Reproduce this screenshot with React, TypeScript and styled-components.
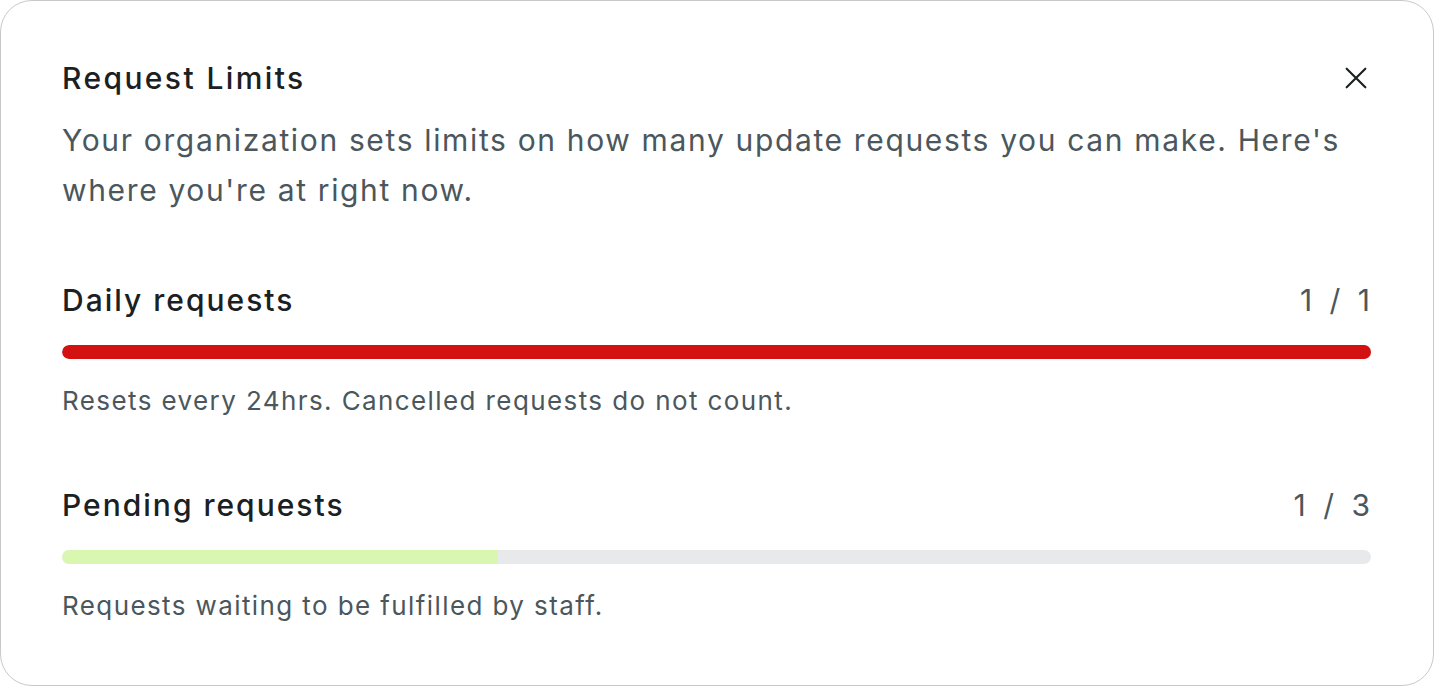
import * as React from "react";
import styled, { createGlobalStyle } from "styled-components";

const GlobalStyle = createGlobalStyle`
  html, body {
    margin: 0;
    padding: 0;
    background: #ffffff;
  }
  body {
    font-family: Inter, "Noto Sans", "Liberation Sans", sans-serif;
  }
`;

const Card = styled.section`
  box-sizing: border-box;
  width: 1434px;
  height: 686px;
  background: #ffffff;
  border: 1px solid #c9c9c9;
  border-radius: 32px;
  padding: 59px 62px 0 61px;
`;

const Header = styled.div`
  display: flex;
  justify-content: space-between;
  align-items: center;
`;

const Title = styled.h2`
  margin: 0;
  font-size: 30px;
  line-height: 36px;
  font-weight: 500;
  letter-spacing: 2.4px;
  color: #1b2022;
`;

const CloseButton = styled.button`
  display: flex;
  align-items: center;
  justify-content: center;
  width: 36px;
  height: 36px;
  padding: 0;
  margin-right: -3px;
  border: none;
  background: transparent;
  color: #1b2022;
  cursor: pointer;
`;

const Description = styled.p`
  margin: 19px 0 0;
  font-size: 30px;
  line-height: 50px;
  letter-spacing: 1.65px;
  color: #4b575c;
`;

const Limit = styled.div<{ $first?: boolean }>`
  margin-top: ${(p) => (p.$first ? "65px" : "66px")};
`;

const LimitRow = styled.div`
  display: flex;
  justify-content: space-between;
  align-items: center;
`;

const LimitName = styled.span`
  font-size: 30px;
  line-height: 40px;
  font-weight: 500;
  letter-spacing: 2px;
  color: #1b2022;
`;

const LimitCount = styled.span`
  font-size: 30px;
  line-height: 40px;
  letter-spacing: 2px;
  word-spacing: 5px;
  color: #4b575c;
  margin-right: -1px;
`;

const Track = styled.div`
  margin-top: 25px;
  height: 14px;
  border-radius: 7px;
  background: #e8e9ea;
  overflow: hidden;
`;

const Fill = styled.div<{ $color: string }>`
  height: 100%;
  background: ${(p) => p.$color};
  border-radius: 7px 0 0 7px;
`;

const Note = styled.p`
  margin: 24px 0 0;
  font-size: 26px;
  line-height: 36px;
  letter-spacing: 1.4px;
  color: #4b575c;
`;

const limits = [
  {
    name: "Daily requests",
    used: 1,
    max: 1,
    note: "Resets every 24hrs. Cancelled requests do not count.",
  },
  {
    name: "Pending requests",
    used: 1,
    max: 3,
    note: "Requests waiting to be fulfilled by staff.",
  },
];

const App = () => {
  return (
    <>
      <GlobalStyle />
      <Card>
        <Header>
          <Title>Request Limits</Title>
          <CloseButton aria-label="Close">
            <svg width="32" height="32" viewBox="0 0 24 24" fill="none" stroke="currentColor" strokeWidth="1.6" strokeLinecap="round">
              <path d="M5 5L19 19M19 5L5 19" />
            </svg>
          </CloseButton>
        </Header>
        <Description>
          Your organization sets limits on how many update requests you can make. Here's where you're at right now.
        </Description>
        {limits.map((l, i) => {
          const full = l.used >= l.max;
          return (
            <Limit key={l.name} $first={i === 0}>
              <LimitRow>
                <LimitName>{l.name}</LimitName>
                <LimitCount>
                  {l.used} / {l.max}
                </LimitCount>
              </LimitRow>
              <Track>
                <Fill
                  $color={full ? "#d41111" : "#d9f7b1"}
                  style={{ width: `${(l.used / l.max) * 100}%` }}
                />
              </Track>
              <Note>{l.note}</Note>
            </Limit>
          );
        })}
      </Card>
    </>
  );
};

export default App;
